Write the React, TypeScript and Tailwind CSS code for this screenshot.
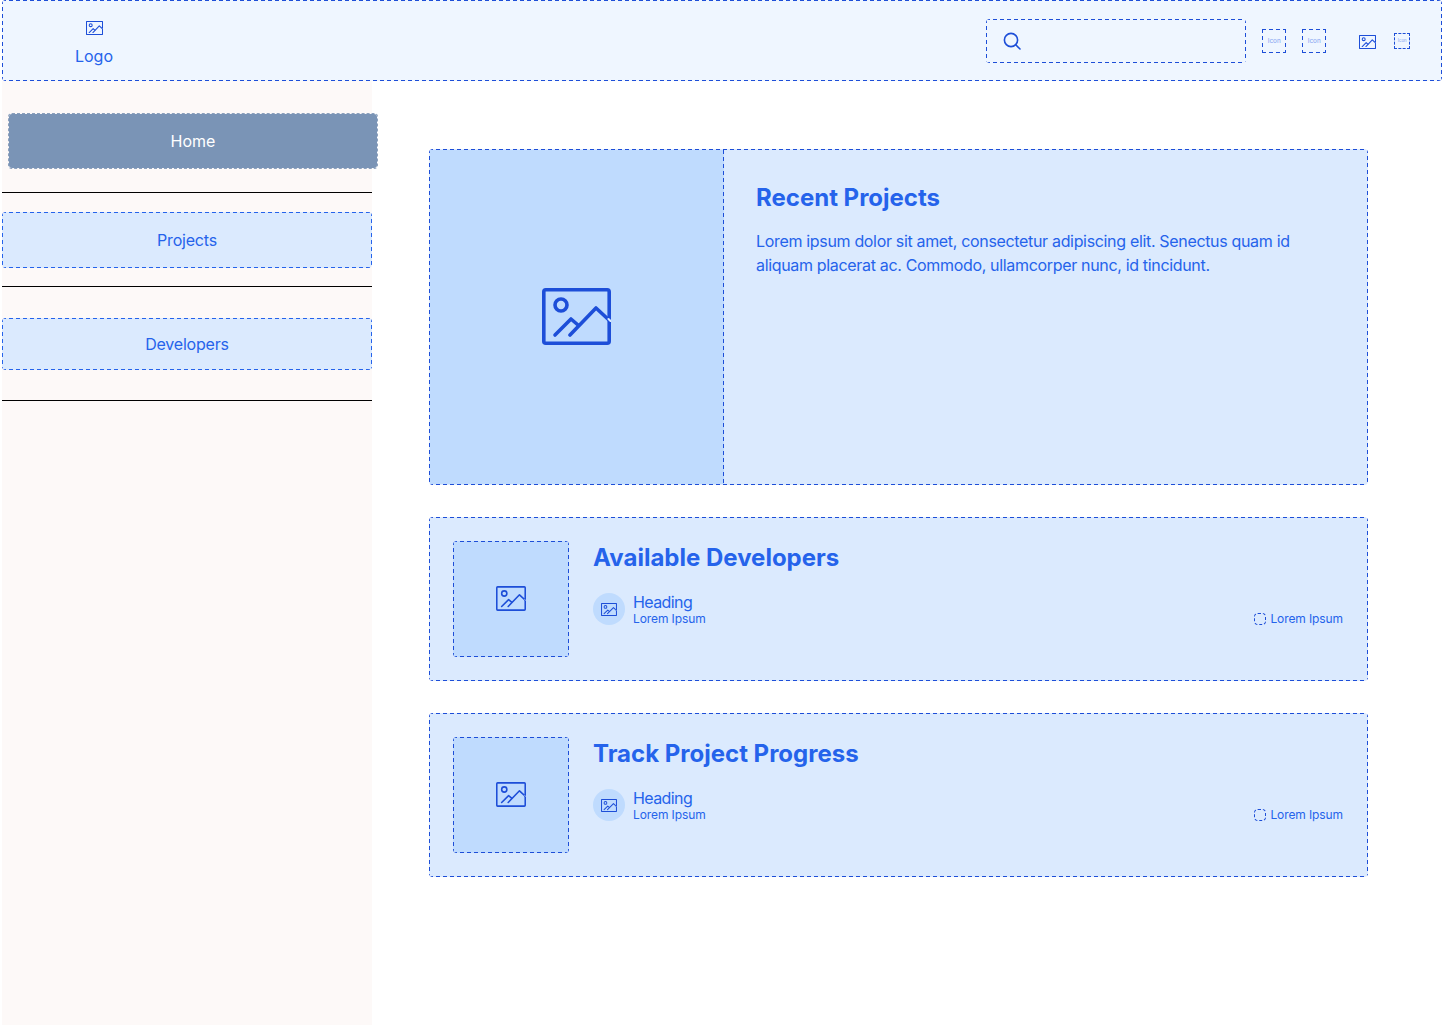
const font = { fontFamily: "Inter, 'Noto Sans', sans-serif" };

// figma-style dashes (4 on, 3 off) are longer than what border-dashed draws at 1px
const dashedDark =
  "border border-transparent [background-origin:border-box] bg-no-repeat [background-image:repeating-linear-gradient(90deg,#1d4ed8_0_4px,transparent_4px_7px),repeating-linear-gradient(90deg,#1d4ed8_0_4px,transparent_4px_7px),repeating-linear-gradient(180deg,#1d4ed8_0_4px,transparent_4px_7px),repeating-linear-gradient(180deg,#1d4ed8_0_4px,transparent_4px_7px)] [background-size:100%_1px,100%_1px,1px_100%,1px_100%] [background-position:0_0,0_100%,0_0,100%_0]";
const dashedBlue =
  "border border-transparent [background-origin:border-box] bg-no-repeat [background-image:repeating-linear-gradient(90deg,#2563eb_0_4px,transparent_4px_7px),repeating-linear-gradient(90deg,#2563eb_0_4px,transparent_4px_7px),repeating-linear-gradient(180deg,#2563eb_0_4px,transparent_4px_7px),repeating-linear-gradient(180deg,#2563eb_0_4px,transparent_4px_7px)] [background-size:100%_1px,100%_1px,1px_100%,1px_100%] [background-position:0_0,0_100%,0_0,100%_0]";

function ImageIcon({ className, stroke = 3.6 }: { className: string; stroke?: number }) {
  return (
    <svg viewBox="0 0 69 57" fill="none" stroke="#1d4ed8" strokeWidth={stroke} strokeLinecap="round" strokeLinejoin="round" className={className}>
      <rect x="1.8" y="1.8" width="65.4" height="53.4" rx="2" />
      <circle cx="19" cy="17" r="6" />
      <polyline points="13,47 29,31 36,37" />
      <polyline points="28,47 54,20 68,33" />
      <line x1="66.5" y1="31" x2="68.5" y2="33" stroke="#dbeafe" strokeWidth="2" />
    </svg>
  );
}

function NavItem({ label, className }: { label: string; className: string }) {
  return (
    <div className={`flex w-[370px] items-center justify-center rounded bg-[#dbeafe] text-base tracking-[-0.2px] text-[#2563eb] ${dashedBlue} ${className}`}>
      {label}
    </div>
  );
}

function IconBox({ text }: { text: string }) {
  return (
    <div className={`ml-4 flex h-6 w-6 items-center justify-center text-[#7f9ff0] ${dashedDark}`}>
      <span className="shrink-0 scale-[0.53] text-xs">{text}</span>
    </div>
  );
}

function FeatureCard({ title }: { title: string }) {
  return (
    <section className={`flex h-[164px] gap-6 rounded bg-[#dbeafe] p-[23px] ${dashedDark}`}>
      <div className={`flex h-[116px] w-[116px] shrink-0 items-center justify-center rounded-sm bg-[#bfdbfe] pb-[2px] ${dashedDark}`}>
        <ImageIcon className="h-[25px] w-[30px]" />
      </div>
      <div className="flex flex-1 flex-col pt-px">
        <h2 className="text-2xl font-bold leading-8 text-[#2563eb]">{title}</h2>
        <div className="mt-[18px] flex items-end justify-between">
          <div className="flex items-center gap-2">
            <div className="flex h-8 w-8 items-center justify-center rounded-full bg-[#bfdbfe]">
              <ImageIcon className="h-[13px] w-4" stroke={4.4} />
            </div>
            <div className="flex flex-col">
              <span className="text-base leading-[20px] tracking-[-0.6px] text-[#2563eb]">Heading</span>
              <span className="text-xs leading-[14px] tracking-[-0.1px] text-[#2563eb]">Lorem Ipsum</span>
            </div>
          </div>
          <div className="mb-px mr-px flex items-center gap-1 text-xs leading-[12px] tracking-[-0.1px] text-[#2563eb]">
            <div className="h-3 w-3 rounded-sm border border-dashed border-[#1d4ed8]" />
            Lorem Ipsum
          </div>
        </div>
      </div>
    </section>
  );
}

export default function App() {
  return (
    <div style={font} className="min-h-[1025px] w-[1444px] overflow-hidden bg-white">
      <header className={`ml-[2px] flex h-[81px] w-[1440px] items-center rounded bg-[#eff6ff] ${dashedDark}`}>
        <div className="ml-[71px] flex w-10 flex-col items-center gap-[11px] pt-[6px]">
          <ImageIcon className="h-[14px] w-[17px]" stroke={4.4} />
          <span className="text-base leading-5 text-[#2563eb]">Logo</span>
        </div>
        <div className={`ml-auto flex h-[44px] w-[260px] items-center rounded pl-4 ${dashedDark}`}>
          <svg viewBox="0 0 18 18" fill="none" stroke="#1d4ed8" strokeWidth="1.6" strokeLinecap="round" className="h-[18px] w-[18px]">
            <circle cx="8" cy="8" r="6.6" />
            <line x1="13" y1="13" x2="17" y2="17" />
          </svg>
        </div>
        <IconBox text="Icon" />
        <IconBox text="Icon" />
        <ImageIcon className="ml-[33px] mt-[3px] h-[14px] w-[17px]" stroke={4.4} />
        <div className="ml-[18px] mr-[31px] flex h-4 w-4 items-center justify-center border border-dashed border-[#1d4ed8] text-[#7f9ff0]">
          <span className="shrink-0 scale-[0.36] text-xs">Icon</span>
        </div>
      </header>

      <div className="flex">
        <aside className="ml-[2px] flex min-h-[944px] w-[370px] shrink-0 flex-col bg-[#fdf9f8]">
          <div className="ml-[6px] mt-8 flex h-14 w-[370px] items-center justify-center rounded border border-dashed border-[#8ba0bd] bg-[#7a94b6] bg-clip-padding text-base text-white">
            Home
          </div>
          <hr className="mt-[23px] border-t border-black" />
          <NavItem label="Projects" className="mt-[19px] h-14" />
          <hr className="mt-[18px] border-t border-black" />
          <NavItem label="Developers" className="mt-[31px] h-[52px]" />
          <hr className="mt-[30px] border-t border-black" />
        </aside>

        <main className="ml-[57px] flex w-[939px] flex-col gap-8 pt-[68px]">
          <section className={`flex h-[336px] rounded bg-[#dbeafe] ${dashedDark}`}>
            <div className="flex w-[294px] shrink-0 items-center justify-center border-r border-transparent bg-[#bfdbfe] bg-no-repeat pb-[2px] [background-image:repeating-linear-gradient(180deg,#1d4ed8_0_4px,transparent_4px_7px)] [background-origin:border-box] [background-position:100%_0] [background-size:1px_100%]">
              <ImageIcon className="h-[57px] w-[69px]" />
            </div>
            <div className="p-8">
              <h2 className="text-2xl font-bold leading-8 text-[#2563eb]">Recent Projects</h2>
              <p className="mt-[15px] text-base leading-6 tracking-[-0.33px] text-[#2563eb]">
                Lorem ipsum dolor sit amet, consectetur adipiscing elit. Senectus quam id aliquam placerat ac. Commodo, ullamcorper nunc, id tincidunt.
              </p>
            </div>
          </section>
          <FeatureCard title="Available Developers" />
          <FeatureCard title="Track Project Progress" />
        </main>
      </div>
    </div>
  );
}
